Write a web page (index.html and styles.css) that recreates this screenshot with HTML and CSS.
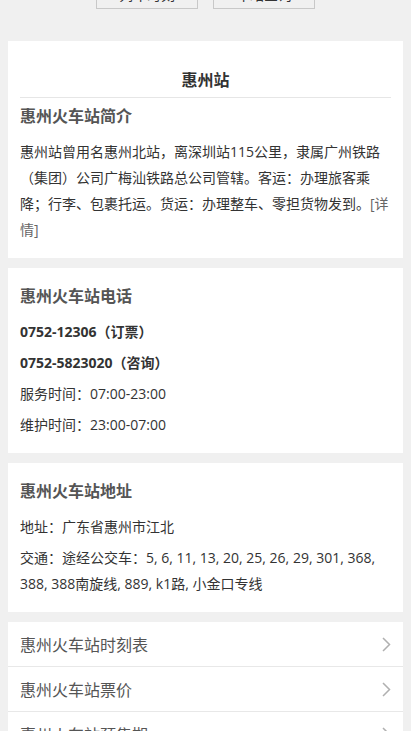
FILE: index.html
```html
<!DOCTYPE html>
<html lang="zh-CN">
<head>
<meta charset="utf-8">
<meta name="viewport" content="width=device-width, initial-scale=1">
<title>惠州站</title>
<link rel="stylesheet" href="styles.css">
</head>
<body>
<div class="nav">
  <a class="nav-btn">列车时刻</a>
  <a class="nav-btn">车站查询</a>
</div>
<main class="page">
  <section class="card">
    <h1 class="card-title">惠州站</h1>
    <h2 class="card-head first">惠州火车站简介</h2>
    <p class="txt">惠州站曾用名惠州北站，离深圳站115公里，隶属广州铁路（集团）公司广梅汕铁路总公司管辖。客运：办理旅客乘降；行李、包裹托运。货运：办理整车、零担货物发到。<a class="more">[详情]</a></p>
  </section>
  <section class="card">
    <h2 class="card-head">惠州火车站电话</h2>
    <p class="txt strong">0752-12306（订票）</p>
    <p class="txt strong">0752-5823020（咨询）</p>
    <p class="txt">服务时间：07:00-23:00</p>
    <p class="txt">维护时间：23:00-07:00</p>
  </section>
  <section class="card">
    <h2 class="card-head">惠州火车站地址</h2>
    <p class="txt">地址：广东省惠州市江北</p>
    <p class="txt">交通：途经公交车：5, 6, 11, 13, 20, 25, 26, 29, 301, 368, 388, 388南旋线, 889, k1路, 小金口专线</p>
  </section>
  <section class="card list">
    <a class="row"><span>惠州火车站时刻表</span><svg class="chev" width="9" height="15" viewBox="0 0 9 15"><path d="M1 1l6.5 6.5L1 14" fill="none" stroke="#b0b0b0" stroke-width="1.5"/></svg></a>
    <a class="row"><span>惠州火车站票价</span><svg class="chev" width="9" height="15" viewBox="0 0 9 15"><path d="M1 1l6.5 6.5L1 14" fill="none" stroke="#b0b0b0" stroke-width="1.5"/></svg></a>
    <a class="row"><span>惠州火车站预售期</span><svg class="chev" width="9" height="15" viewBox="0 0 9 15"><path d="M1 1l6.5 6.5L1 14" fill="none" stroke="#b0b0b0" stroke-width="1.5"/></svg></a>
  </section>
</main>
</body>
</html>
```
FILE: styles.css
```css
html, body {
  margin: 0;
  padding: 0;
}
body {
  background: #f0f0f0;
  font-family: "Open Sans", "Noto Sans CJK SC", "Noto Sans", sans-serif;
  color: #333;
  font-size: 14px;
}
.nav {
  display: flex;
  justify-content: center;
  gap: 15px;
  margin-top: -21px;
}
.nav-btn {
  box-sizing: border-box;
  width: 102px;
  height: 30px;
  border: 1px solid #c8c8c8;
  display: flex;
  align-items: center;
  justify-content: center;
  font-size: 14px;
  color: #333;
}
.page {
  padding: 32px 8px 0;
}
.card {
  background: #fff;
  padding: 16px 12px 15px;
  margin-bottom: 10px;
}
.card-title {
  margin: 0;
  padding: 11px 0 5px;
  border-bottom: 1px solid #e6e6e6;
  font-size: 16px;
  line-height: 24px;
  font-weight: bold;
  text-align: center;
  color: #333;
}
.card-head {
  margin: 0 0 11px;
  font-size: 16px;
  line-height: 24px;
  font-weight: bold;
  color: #555;
}
.card-head.first {
  margin-top: 6px;
}
.txt {
  margin: 5px 0 0;
  font-size: 14px;
  line-height: 26px;
  color: #333;
}
.card-head + .txt {
  margin-top: 0;
}
.strong {
  font-weight: bold;
}
.more {
  color: #666;
}
.list {
  padding: 0;
}
.row {
  display: flex;
  align-items: center;
  justify-content: space-between;
  height: 44px;
  padding: 0 12px;
  border-bottom: 1px solid #e8e8e8;
  font-size: 16px;
  color: #555;
}
.chev {
  display: block;
}
```
